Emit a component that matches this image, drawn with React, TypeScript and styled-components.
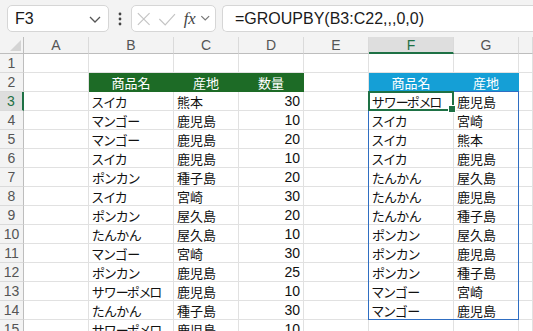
import React from "react";
import styled, { createGlobalStyle } from "styled-components";

const GlobalStyle = createGlobalStyle`
  html, body {
    margin: 0;
    padding: 0;
    background: #ffffff;
  }
  body {
    width: 533px;
    height: 331px;
    overflow: hidden;
    font-family: "Liberation Sans", "Noto Sans CJK JP", sans-serif;
  }
`;

const Window = styled.div`
  width: 533px;
  height: 331px;
  display: flex;
  flex-direction: column;
  overflow: hidden;
  background: #f3f3f3;
`;

const FormulaBar = styled.div`
  height: 37px;
  flex: none;
  display: flex;
  align-items: flex-start;
  padding: 5px 0 0 7px;
  box-sizing: border-box;
`;

const Box = styled.div<{ $w?: number }>`
  height: 27px;
  box-sizing: border-box;
  background: #ffffff;
  border: 1px solid #d6d6d6;
  border-radius: 5px;
  display: flex;
  align-items: center;
  width: ${(p) => (p.$w ? `${p.$w}px` : "auto")};
  flex: ${(p) => (p.$w ? "none" : "1")};
`;

const FormulaBox = styled(Box)`
  border-right: none;
  border-radius: 5px 0 0 5px;
  margin-left: 6px;
`;

const NameText = styled.span`
  flex: 1;
  padding-left: 7px;
  font-size: 16px;
  color: #1a1a1a;
`;

const DropIcon = styled.span`
  display: flex;
  padding-right: 6px;
`;

const Dots = styled.div`
  width: 22px;
  display: flex;
  justify-content: center;
  align-items: center;
  height: 27px;
`;

const FormulaText = styled.span`
  padding-left: 12px;
  font-size: 16px;
  color: #1a1a1a;
  white-space: nowrap;
`;

const Sheet = styled.div`
  flex: 1;
  display: grid;
  grid-template-columns: 24px 65px 85px 65px 65px 65px 85px 65px 1fr;
  grid-template-rows: 17px;
  grid-auto-rows: 19px;
  background: #ffffff;
  overflow: hidden;
`;

type Pos = { $row: number; $col: number };

const place = (p: Pos) => `grid-row: ${p.$row}; grid-column: ${p.$col};`;

const Corner = styled.div`
  grid-row: 1;
  grid-column: 1;
  background: #f3f3f3;
  border-right: 1px solid #bdbdbd;
  border-bottom: 1px solid #bdbdbd;
  box-sizing: border-box;
  position: relative;
  &::after {
    content: "";
    position: absolute;
    right: 2px;
    bottom: 2px;
    width: 0;
    height: 0;
    border-left: 11px solid transparent;
    border-bottom: 11px solid #d4d4d4;
  }
`;

const ColHead = styled.div<Pos & { $active?: boolean }>`
  ${place}
  box-sizing: border-box;
  background: ${(p) => (p.$active ? "#dedede" : "#f3f3f3")};
  border-right: 1px solid #dadada;
  border-bottom: ${(p) => (p.$active ? "2px solid #1e7145" : "1px solid #bdbdbd")};
  display: flex;
  align-items: center;
  justify-content: center;
  font-size: 14px;
  color: ${(p) => (p.$active ? "#1e7145" : "#555555")};
`;

const RowHead = styled.div<Pos & { $active?: boolean }>`
  ${place}
  box-sizing: border-box;
  background: ${(p) => (p.$active ? "#dedede" : "#f3f3f3")};
  border-right: ${(p) => (p.$active ? "2px solid #1e7145" : "1px solid #bdbdbd")};
  border-bottom: 1px solid #dadada;
  display: flex;
  align-items: center;
  justify-content: center;
  font-size: 14px;
  color: ${(p) => (p.$active ? "#1e7145" : "#555555")};
`;

type Fill = "green" | "blue" | undefined;

const Cell = styled.div<Pos & { $fill?: Fill; $align?: "left" | "center" | "right" }>`
  ${place}
  box-sizing: border-box;
  border-right: 1px solid ${(p) => (p.$fill ? "transparent" : "#e1e1e1")};
  border-bottom: 1px solid ${(p) => (p.$fill ? "transparent" : "#e1e1e1")};
  background: ${(p) =>
    p.$fill === "green" ? "#1d6b26" : p.$fill === "blue" ? "#159fd6" : "#ffffff"};
  color: ${(p) => (p.$fill ? "#ffffff" : "#111111")};
  font-size: 14px;
  display: flex;
  align-items: center;
  justify-content: ${(p) =>
    p.$align === "center" ? "center" : p.$align === "right" ? "flex-end" : "flex-start"};
  padding: 0 3px;
  white-space: nowrap;
  overflow: hidden;
`;

const Jp = styled.span`
  font-size: 13px;
  font-feature-settings: "palt";
`;

// the long vowel mark and メロ are narrow in the sheet's font
const Choon = styled.span`
  letter-spacing: -2px;
`;

const Narrow = styled.span`
  letter-spacing: -1px;
`;

const SpillFrame = styled.div`
  grid-column: 7 / 9;
  grid-row: 4 / 16;
  border: 1px solid #2f6ec2;
  margin: -1px 0 0 -1px;
  pointer-events: none;
  z-index: 1;
`;

const ActiveFrame = styled.div`
  grid-column: 7 / 8;
  grid-row: 4 / 5;
  border: 2px solid #1e7145;
  margin: -1px 0 0 -1px;
  pointer-events: none;
  position: relative;
  z-index: 2;
  &::after {
    content: "";
    position: absolute;
    right: -4px;
    bottom: -4px;
    width: 6px;
    height: 6px;
    background: #1e7145;
    border: 1px solid #ffffff;
  }
`;

const Chevron = () => (
  <svg width="14" height="10" viewBox="0 0 14 10">
    <path d="M2 3 L7 8 L12 3" fill="none" stroke="#555" strokeWidth="1.3" />
  </svg>
);

function Label({ text }: { text?: string }) {
  if (!text) return null;
  const parts = text.split(/(ー|メロ)/);
  return (
    <Jp>
      {parts.map((p, i) =>
        p === "ー" ? <Choon key={i}>ー</Choon> : p === "メロ" ? <Narrow key={i}>{p}</Narrow> : p
      )}
    </Jp>
  );
}

const left: [string, string, number][] = [
  ["スイカ", "熊本", 30],
  ["マンゴー", "鹿児島", 10],
  ["マンゴー", "鹿児島", 20],
  ["スイカ", "鹿児島", 10],
  ["ポンカン", "種子島", 20],
  ["スイカ", "宮崎", 30],
  ["ポンカン", "屋久島", 20],
  ["たんかん", "屋久島", 10],
  ["マンゴー", "宮崎", 30],
  ["ポンカン", "鹿児島", 25],
  ["サワーポメロ", "鹿児島", 10],
  ["たんかん", "種子島", 30],
  ["サワーポメロ", "鹿児島", 10],
];

const right: [string, string][] = [
  ["サワーポメロ", "鹿児島"],
  ["スイカ", "宮崎"],
  ["スイカ", "熊本"],
  ["スイカ", "鹿児島"],
  ["たんかん", "屋久島"],
  ["たんかん", "鹿児島"],
  ["たんかん", "種子島"],
  ["ポンカン", "屋久島"],
  ["ポンカン", "鹿児島"],
  ["ポンカン", "種子島"],
  ["マンゴー", "宮崎"],
  ["マンゴー", "鹿児島"],
];

const cols = ["A", "B", "C", "D", "E", "F", "G", ""];

export default function App() {
  const rows: React.ReactNode[] = [];
  for (let r = 1; r <= 15; r++) {
    const gr = r + 1;
    const l = r >= 3 ? left[r - 3] : undefined;
    const g = r >= 3 ? right[r - 3] : undefined;
    const head = r === 2;
    rows.push(
      <React.Fragment key={r}>
        <RowHead $row={gr} $col={1} $active={r === 3}>
          {r}
        </RowHead>
        <Cell $row={gr} $col={2} />
        <Cell $row={gr} $col={3} $fill={head ? "green" : undefined} $align={head ? "center" : "left"}>
          <Label text={head ? "商品名" : l?.[0]} />
        </Cell>
        <Cell $row={gr} $col={4} $fill={head ? "green" : undefined} $align={head ? "center" : "left"}>
          <Label text={head ? "産地" : l?.[1]} />
        </Cell>
        <Cell $row={gr} $col={5} $fill={head ? "green" : undefined} $align={head ? "center" : "right"}>
          {head ? <Label text="数量" /> : l?.[2]}
        </Cell>
        <Cell $row={gr} $col={6} />
        <Cell $row={gr} $col={7} $fill={head ? "blue" : undefined} $align={head ? "center" : "left"}>
          <Label text={head ? "商品名" : g?.[0]} />
        </Cell>
        <Cell $row={gr} $col={8} $fill={head ? "blue" : undefined} $align={head ? "center" : "left"}>
          <Label text={head ? "産地" : g?.[1]} />
        </Cell>
        <Cell $row={gr} $col={9} />
      </React.Fragment>
    );
  }

  return (
    <Window>
      <GlobalStyle />
      <FormulaBar>
        <Box $w={102}>
          <NameText>F3</NameText>
          <DropIcon>
            <Chevron />
          </DropIcon>
        </Box>
        <Dots>
          <svg width="4" height="14" viewBox="0 0 4 14">
            <circle cx="2" cy="2" r="1.4" fill="#444" />
            <circle cx="2" cy="7" r="1.4" fill="#444" />
            <circle cx="2" cy="12" r="1.4" fill="#444" />
          </svg>
        </Dots>
        <Box $w={85}>
          <svg width="85" height="25" viewBox="0 0 85 25">
            <path d="M6 7 L18 19 M18 7 L6 19" stroke="#c4c4c4" strokeWidth="1.2" fill="none" />
            <path d="M28 13 L34 19 L44 8" stroke="#c4c4c4" strokeWidth="1.2" fill="none" />
            <text
              x="53"
              y="18"
              fontFamily="'Liberation Serif', serif"
              fontStyle="italic"
              fontSize="17"
              fill="#444"
            >
              fx
            </text>
            <path d="M71 10 L75 14 L79 10" stroke="#777" strokeWidth="1.2" fill="none" />
          </svg>
        </Box>
        <FormulaBox>
          <FormulaText>=GROUPBY(B3:C22,,,0,0)</FormulaText>
        </FormulaBox>
      </FormulaBar>
      <Sheet>
        <Corner />
        {cols.map((c, i) => (
          <ColHead key={i} $row={1} $col={i + 2} $active={c === "F"}>
            {c}
          </ColHead>
        ))}
        {rows}
        <SpillFrame />
        <ActiveFrame />
      </Sheet>
    </Window>
  );
}
